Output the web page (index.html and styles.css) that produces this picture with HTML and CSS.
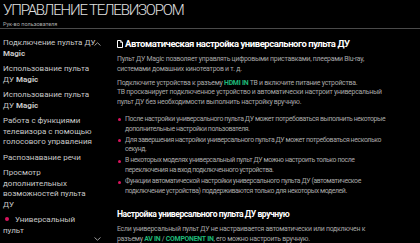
FILE: index.html
```html
<!DOCTYPE html>
<html lang="ru">
<head>
    <meta charset="UTF-8">
    <meta name="viewport" content="width=device-width, initial-scale=1.0">
    <title>Управление телевизором</title>
    <link rel="stylesheet" href="styles.css">
</head>
<body>
    <div class="header">
        <h1>УПРАВЛЕНИЕ ТЕЛЕВИЗОРОМ</h1>
        <div class="subtitle">Рук-во пользователя</div>
    </div>
    <div class="main">
        <div class="sidebar">
            <div class="menu-item open">Подключение пульта ДУ <b>Magic</b></div>
            <svg class="chevron" width="7" height="4" viewBox="0 0 7 4"><path d="M0.5 3.5 L3.5 0.8 L6.5 3.5" fill="none" stroke="#999" stroke-width="1"/></svg>
            <div class="menu-item">Использование пульта ДУ <b>Magic</b></div>
            <div class="menu-item">Использование пульта ДУ <b>Magic</b></div>
            <div class="menu-item">Работа с функциями телевизора с помощью голосового управления</div>
            <div class="menu-item">Распознавание речи</div>
            <div class="menu-item">Просмотр дополнительных возможностей пульта ДУ</div>
            <div class="menu-item"><span class="dot"></span>Универсальный пульт</div>
            <svg class="chevron down" width="7" height="4" viewBox="0 0 7 4"><path d="M0.5 0.5 L3.5 3.2 L6.5 0.5" fill="none" stroke="#999" stroke-width="1"/></svg>
        </div>
        <div class="content">
            <h2>
                <svg class="doc-icon" width="6" height="8" viewBox="0 0 6 8"><path d="M0.5 0.5 H3.8 L5.5 2.2 V7.5 H0.5 Z" fill="none" stroke="#fff" stroke-width="1"/><path d="M3.6 0.5 V2.4 H5.5" fill="none" stroke="#fff" stroke-width="0.8"/></svg>
                Автоматическая настройка универсального пульта ДУ
            </h2>
            <p>Пульт ДУ Magic позволяет управлять цифровыми приставками, плеерами Blu-ray, системами домашних кинотеатров и т. д.</p>
            <p>Подключите устройства к разъему <span class="port">HDMI IN</span> ТВ и включите питание устройства.<br>ТВ просканирует подключенное устройство и автоматически настроит универсальный пульт ДУ без необходимости выполнить настройку вручную.</p>
            <ul>
                <li>После настройки универсального пульта ДУ может потребоваться выполнить некоторые дополнительные настройки пользователя.</li>
                <li>Для завершения настройки универсального пульта ДУ может потребоваться несколько секунд.</li>
                <li>В некоторых моделях универсальный пульт ДУ можно настроить только после переключения на вход подключенного устройства.</li>
                <li>Функции автоматической настройки универсального пульта ДУ (автоматическое подключение устройства) поддерживаются только для некоторых моделей.</li>
            </ul>
            <h3>Настройка универсального пульта ДУ вручную</h3>
            <p>Если универсальный пульт ДУ не настраивается автоматически или подключен к разъему <span class="port">AV IN</span> / <span class="port">COMPONENT IN</span>, его можно настроить вручную.</p>
        </div>
    </div>
</body>
</html>
```

FILE: styles.css
```css
body {
    margin: 0;
    background-color: #000;
    color: #ccc;
    font-family: Roboto, "Noto Sans", sans-serif;
    overflow: hidden;
}
.header {
    padding: 0 3px;
    height: 28px;
    border-bottom: 1px solid #4a4a4a;
}
.header h1 {
    margin: 0;
    padding-top: 1px;
    font-size: 15px;
    font-weight: 300;
    line-height: 19px;
    color: #e0e0e0;
    letter-spacing: -1.2px;
}
.subtitle {
    font-size: 5.5px;
    line-height: 7px;
    color: #aaa;
    margin-top: 1px;
}
.main {
    display: flex;
}
.sidebar {
    flex: none;
    width: 104px;
    padding: 9px 0 0 3px;
    box-sizing: border-box;
    position: relative;
}
.menu-item {
    font-size: 8px;
    line-height: 10.5px;
    color: #c8c8c8;
    margin-bottom: 5px;
    padding-right: 9px;
}
.menu-item.open {
    padding-right: 4px;
}
.menu-item b {
    font-weight: 700;
}
.chevron {
    position: absolute;
    right: 3px;
    top: 13px;
}
.chevron.down {
    top: 208px;
}
.dot {
    display: inline-block;
    width: 4px;
    height: 4px;
    border-radius: 50%;
    background-color: #d9145e;
    margin: 0 6px 1px 2px;
}
.content {
    flex: 1;
    padding: 9px 31px 0 13px;
}
h2 {
    margin: 0 0 5px;
    font-size: 9.5px;
    line-height: 12px;
    font-weight: 700;
    color: #fff;
    letter-spacing: -0.45px;
    display: flex;
    align-items: center;
    gap: 2px;
}
.doc-icon {
    flex: none;
}
p {
    margin: 0 0 4px;
    font-size: 6.9px;
    line-height: 9.8px;
    color: #a8a8a8;
    letter-spacing: -0.25px;
}
.port {
    color: #1fb878;
    font-weight: 700;
}
ul {
    margin: 7px 0 0;
    padding: 0;
    list-style: none;
}
li {
    position: relative;
    padding-left: 8px;
    font-size: 6.9px;
    line-height: 9.6px;
    color: #a8a8a8;
    letter-spacing: -0.4px;
    margin-bottom: 1.5px;
}
li::before {
    content: "";
    position: absolute;
    left: 1px;
    top: 3.5px;
    width: 3px;
    height: 3px;
    border-radius: 50%;
    background-color: #d9145e;
}
h3 {
    margin: 12px 0 5px;
    font-size: 8.6px;
    line-height: 12px;
    font-weight: 700;
    color: #fff;
    letter-spacing: -0.45px;
}
```
